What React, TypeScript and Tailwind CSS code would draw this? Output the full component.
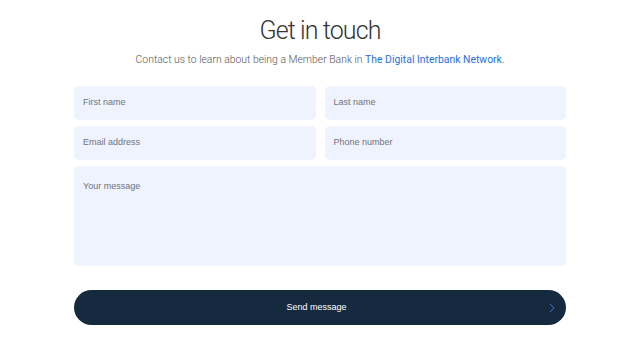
import { ChevronRight } from 'lucide-react';

const Field = ({ label }: { label: string }) => (
  <div className="h-[34px] rounded-[5px] bg-[#eef3fd] px-[9px] flex items-center">
    <span className="text-[9px] text-[#6f7480]">{label}</span>
  </div>
);

export default function App() {
  return (
    <div className="w-[640px] h-[362px] bg-white font-['Liberation_Sans',sans-serif] flex flex-col items-center">
      {/* Heading */}
      <h1 className="mt-[16px] text-[25px] leading-[30px] font-light tracking-[-0.9px] text-[#333] font-['Roboto',sans-serif]">
        Get in touch
      </h1>
      <p className="mt-[7px] text-[10.4px] leading-[14px] text-[#555] font-['Roboto',sans-serif] font-light">
        Contact us to learn about being a Member Bank in{' '}
        <span className="text-[#2a6fd6] font-normal">The Digital Interbank Network</span>.
      </p>

      {/* Form */}
      <div className="mt-[19px] w-[492px] flex flex-col gap-[6px]">
        <div className="grid grid-cols-2 gap-[9px]">
          <Field label="First name" />
          <Field label="Last name" />
        </div>
        <div className="grid grid-cols-2 gap-[9px]">
          <Field label="Email address" />
          <Field label="Phone number" />
        </div>
        <div className="h-[100px] rounded-[5px] bg-[#eef3fd] px-[9px] pt-[12px] leading-[12px]">
          <span className="text-[9px] text-[#6f7480]">Your message</span>
        </div>

        <button className="mt-[18px] h-[35px] rounded-full bg-[#152a3e] relative flex items-center justify-center">
          <span className="text-[9px] text-white mr-[7px]">Send message</span>
          <ChevronRight className="absolute right-[6px] w-[16px] h-[16px] text-[#3b7ddd]" strokeWidth={1.4} />
        </button>
      </div>
    </div>
  );
}
